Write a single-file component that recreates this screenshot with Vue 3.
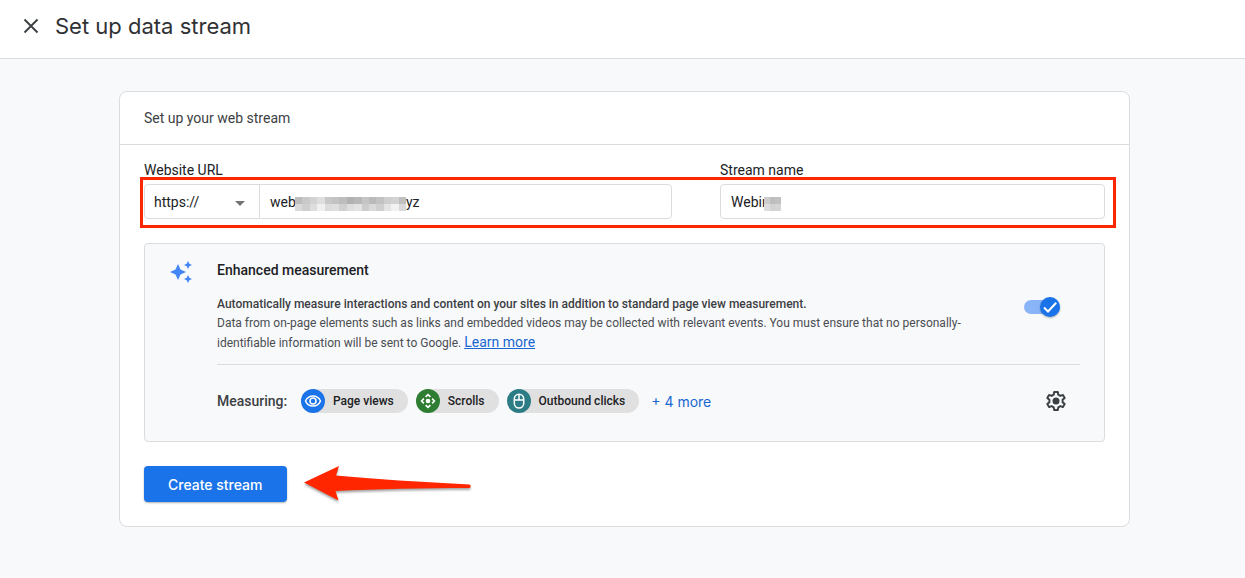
<script setup>
import { ref } from 'vue'

const protocol = ref('https://')
const url = ref('web')
const streamName = ref('Webin')
const enhanced = ref(true)

const urlMosaic = [
  '#bdbdbd', '#c9c9c9', '#d3d3d3', '#dedede', '#c8c8c8', '#c3c3c3', '#bdbdbd', '#b1b1b1', '#b8b8b8', '#c5c5c5', '#bababa', '#c2c2c2', '#cecece', '#d2d2d2', '#c0c0c0',
  '#dadada', '#cfcfcf', '#dddddd', '#f0f0f0', '#dcdcdc', '#dfdfdf', '#d0d0d0', '#dedede', '#e3e3e3', '#cccccc', '#dadada', '#cfcfcf', '#e4e4e4', '#f2f2f2', '#d9d9d9',
]
const nameMosaic = ['#cccccc', '#bdbdbd', '#c1c1c1', '#dddddd', '#d3d3d3', '#d5d5d5']
</script>

<template>
  <div class="page">
    <header class="topbar">
      <button class="close" type="button" aria-label="Close">
        <svg width="16" height="16" viewBox="0 0 16 16" fill="none" stroke="#3c4043" stroke-width="1.9"><path d="M1.5 1.5l13 13M14.5 1.5l-13 13" /></svg>
      </button>
      <h1>Set up data stream</h1>
    </header>

    <main class="card">
      <h2 class="card-head">Set up your web stream</h2>
      <form class="card-body" @submit.prevent>
        <div class="fields">
          <div class="field field-url">
            <label for="url">Website URL</label>
            <div class="box">
              <div class="select-wrap">
                <select v-model="protocol" aria-label="Protocol">
                  <option>https://</option>
                  <option>http://</option>
                </select>
                <svg class="caret" width="10" height="5" viewBox="0 0 10 5"><path d="M0 0h10L5 5z" fill="#757575" /></svg>
              </div>
              <div class="input-wrap">
                <input id="url" v-model="url" type="text" />
                <span class="mosaic mosaic-url"><i v-for="(c, i) in urlMosaic" :key="i" :style="{ background: c }"></i></span>
                <span class="tail">yz</span>
              </div>
            </div>
          </div>
          <div class="field field-name">
            <label for="name">Stream name</label>
            <div class="box">
              <div class="input-wrap">
                <input id="name" v-model="streamName" type="text" />
                <span class="mosaic mosaic-name"><i v-for="(c, i) in nameMosaic" :key="i" :style="{ background: c }"></i></span>
              </div>
            </div>
          </div>
          <div class="highlight"></div>
        </div>

        <section class="panel">
          <svg class="sparkle" width="24" height="24" viewBox="0 0 24 24" fill="#4285f4">
            <path d="M9 4L11.500 9.600L17 12L11.500 14.500L9 20L6.500 14.500L1 12L6.500 9.600z" />
            <path d="M19 1L20.300 3.700L23 5L20.300 6.300L19 9L17.700 6.300L15 5L17.700 3.700z" />
            <path d="M19 15L20.300 17.700L23 19L20.300 20.300L19 23L17.700 20.300L15 19L17.700 17.700z" />
          </svg>
          <div class="panel-main">
            <h3>Enhanced measurement</h3>
            <div class="info">
              <p>
                <strong>Automatically measure interactions and content on your sites in addition to standard page view measurement.</strong><br />
                Data from on-page elements such as links and embedded videos may be collected with relevant events. You must ensure that no personally-<br />identifiable information will be sent to Google. <a href="#">Learn more</a>
              </p>
              <label class="switch">
                <input v-model="enhanced" type="checkbox" aria-label="Enhanced measurement" />
                <span class="knob">
                  <svg width="20" height="20" viewBox="0 0 20 20" fill="none" stroke="#fff" stroke-width="2"><path d="M4 10.5l4 4 8.2-8.8" /></svg>
                </span>
              </label>
            </div>
            <div class="measuring">
              <span class="measuring-label">Measuring:</span>
              <span class="chip">
                <svg width="24" height="24" viewBox="0 0 24 24" fill="none" stroke="#fff" stroke-width="1.5">
                  <circle cx="12" cy="12" r="12" fill="#1a73e8" stroke="none" />
                  <path d="M4.5 12C6 8.700 8.800 6.900 12 6.900s6 1.800 7.500 5.100c-1.500 3.300-4.300 5.100-7.500 5.100S6 15.300 4.500 12z" />
                  <circle cx="12" cy="12" r="3" />
                </svg>
                Page views
              </span>
              <span class="chip">
                <svg width="24" height="24" viewBox="0 0 24 24" fill="none" stroke="#fff" stroke-width="1.600">
                  <circle cx="12" cy="12" r="12" fill="#2e7d32" stroke="none" />
                  <circle cx="12" cy="12" r="2.300" fill="#fff" stroke="none" />
                  <path d="M9.600 7.900L12 5.600l2.400 2.300M9.600 16.100l2.400 2.300 2.400-2.300M7.900 9.600L5.600 12l2.300 2.400M16.100 9.600l2.300 2.400-2.300 2.400" />
                </svg>
                Scrolls
              </span>
              <span class="chip">
                <svg width="24" height="24" viewBox="0 0 24 24" fill="none" stroke="#fff" stroke-width="1.500">
                  <circle cx="12" cy="12" r="12" fill="#2b7c85" stroke="none" />
                  <rect x="7.300" y="5.200" width="9.400" height="13.800" rx="4.700" />
                  <path d="M7.300 11h9.400M12 5.200V11" />
                </svg>
                Outbound clicks
              </span>
              <a class="more" href="#">+ 4 more</a>
              <button class="gear" type="button" aria-label="Settings">
                <svg width="24" height="24" viewBox="0 0 24 24" fill="none" stroke="#3c4043" stroke-width="2" stroke-linejoin="round">
                  <path d="M10.200 3h3.600l.5 2.700 2 1.200 2.600-1 1.800 3.100-2.100 1.800v2.400l2.100 1.800-1.800 3.100-2.600-1-2 1.200-.5 2.700h-3.600l-.5-2.700-2-1.200-2.600 1L3.300 15l2.100-1.800v-2.400L3.300 9l1.800-3.100 2.600 1 2-1.200z" />
                  <circle cx="12" cy="12" r="3.500" fill="#3c4043" stroke="none" />
                </svg>
              </button>
            </div>
          </div>
        </section>

        <div class="actions">
          <button class="create" type="submit">Create stream</button>
          <svg class="arrow" width="170" height="40" viewBox="0 0 170 40">
            <path d="M1 18.500L36 2L33 11.500C70 15 120 18 166.500 20.500Q169 22 166.500 24C120 24 75 25 32.500 27L35.500 36.500z" fill="#ff2600" />
          </svg>
        </div>
      </form>
    </main>
  </div>
</template>

<style>
body {
  background: #f8f9fb;
}
</style>

<style scoped>
.page {
  font-family: Roboto, "Liberation Sans", sans-serif;
  font-size: 14px;
  color: #202124;
}
.page * {
  box-sizing: border-box;
}
h1, h2, h3, p {
  margin: 0;
  font-weight: 400;
}
button {
  border: 0;
  padding: 0;
  background: none;
  font: inherit;
  cursor: pointer;
}
svg {
  display: block;
  flex: none;
}
a {
  color: #1967d2;
}
.topbar {
  display: flex;
  align-items: center;
  gap: 16px;
  padding: 9px 23px 15px;
  background: #fff;
  border-bottom: 1px solid #dadce0;
}
h1 {
  font-family: Inter, Roboto, sans-serif;
  font-size: 22px;
  line-height: 34px;
  color: #303134;
}
.card {
  margin: 32px 115px 51px 119px;
  background: #fff;
  border: 1px solid #dadce0;
  border-radius: 8px;
}
.card-head {
  padding: 14px 24px;
  font-size: 14px;
  line-height: 24px;
  color: #3c4043;
  border-bottom: 1px solid #dadce0;
}
.card-body {
  padding: 15px 24px 24px;
}
.fields {
  position: relative;
  display: flex;
  gap: 48px;
}
.field-url {
  flex: 528 1 0;
}
.field-name {
  flex: 385 1 0;
}
.field > label {
  display: block;
  line-height: 20px;
  margin-bottom: 4px;
}
.box {
  display: flex;
  height: 35px;
  border: 1px solid #dadce0;
  border-radius: 4px;
  background: #fff;
}
.select-wrap {
  position: relative;
  width: 115px;
  border-right: 1px solid #dadce0;
}
.box select,
.box input {
  appearance: none;
  width: 100%;
  height: 100%;
  border: 0;
  outline: 0;
  padding: 0 10px;
  background: transparent;
  font: inherit;
  color: #202124;
}
.box select {
  padding: 0 9px;
}
.caret {
  position: absolute;
  right: 14px;
  top: 16px;
}
.input-wrap {
  position: relative;
  flex: 1;
}
.mosaic {
  position: absolute;
  top: 12px;
  display: grid;
  grid-auto-rows: 7px;
}
.mosaic-url {
  left: 35px;
  width: 111px;
  grid-template-columns: repeat(15, 1fr);
}
.mosaic-name {
  left: 43px;
  width: 17px;
  grid-template-columns: repeat(3, 1fr);
}
.tail {
  position: absolute;
  left: 146px;
  top: 0;
  line-height: 34px;
}
.highlight {
  position: absolute;
  inset: 17px -11px -9px -4px;
  border: 3px solid #ff2600;
  pointer-events: none;
}
.panel {
  display: flex;
  gap: 24px;
  margin-top: 24px;
  padding: 16px 24px 28px;
  background: #f8f9fb;
  border: 1px solid #dadce0;
  border-radius: 4px;
}
.panel-main {
  flex: 1;
  min-width: 0;
}
h3 {
  font-size: 14px;
  line-height: 20px;
  font-weight: 500;
}
.info {
  display: flex;
  justify-content: space-between;
  padding: 15px 0 11px;
  border-bottom: 1px solid #dadce0;
}
.info p {
  font-size: 12px;
  line-height: 19px;
  color: #4a4d51;
  white-space: nowrap;
}
.info strong {
  font-weight: 500;
  color: #3c4043;
}
.info a {
  font-size: 14px;
}
.switch {
  position: relative;
  width: 36px;
  height: 14px;
  margin: 5px 20px 0 0;
}
.switch input {
  appearance: none;
  display: block;
  width: 36px;
  height: 14px;
  margin: 0;
  border-radius: 7px;
  background: #8ab4f8;
}
.knob {
  position: absolute;
  right: 0;
  top: -3px;
  border-radius: 50%;
  background: #1a73e8;
  box-shadow: 0 1px 2px rgba(60, 64, 67, 0.4);
}
.measuring {
  display: flex;
  align-items: center;
  gap: 8px;
  padding-top: 24px;
}
.measuring-label {
  width: 76px;
  font-weight: 500;
  color: #3c4043;
}
.chip {
  display: flex;
  align-items: center;
  gap: 8px;
  height: 24px;
  padding-right: 14px;
  border-radius: 12px;
  background: #e0e0e0;
  font-size: 12px;
  font-weight: 500;
}
.more {
  margin-left: 4px;
  font-family: Inter, Roboto, sans-serif;
  text-decoration: none;
}
.gear {
  margin: 0 12px 0 auto;
}
.actions {
  display: flex;
  align-items: center;
  gap: 16px;
  height: 36px;
  margin-top: 24px;
}
.create {
  height: 36px;
  padding: 0 24px;
  border-radius: 4px;
  background: #1a73e8;
  color: #fff;
  font-family: Inter, Roboto, sans-serif;
  font-weight: 500;
  box-shadow: 0 1px 2px rgba(60, 64, 67, 0.4);
}
.arrow {
  filter: drop-shadow(0 2px 1px rgba(0, 0, 0, 0.35));
}
</style>
